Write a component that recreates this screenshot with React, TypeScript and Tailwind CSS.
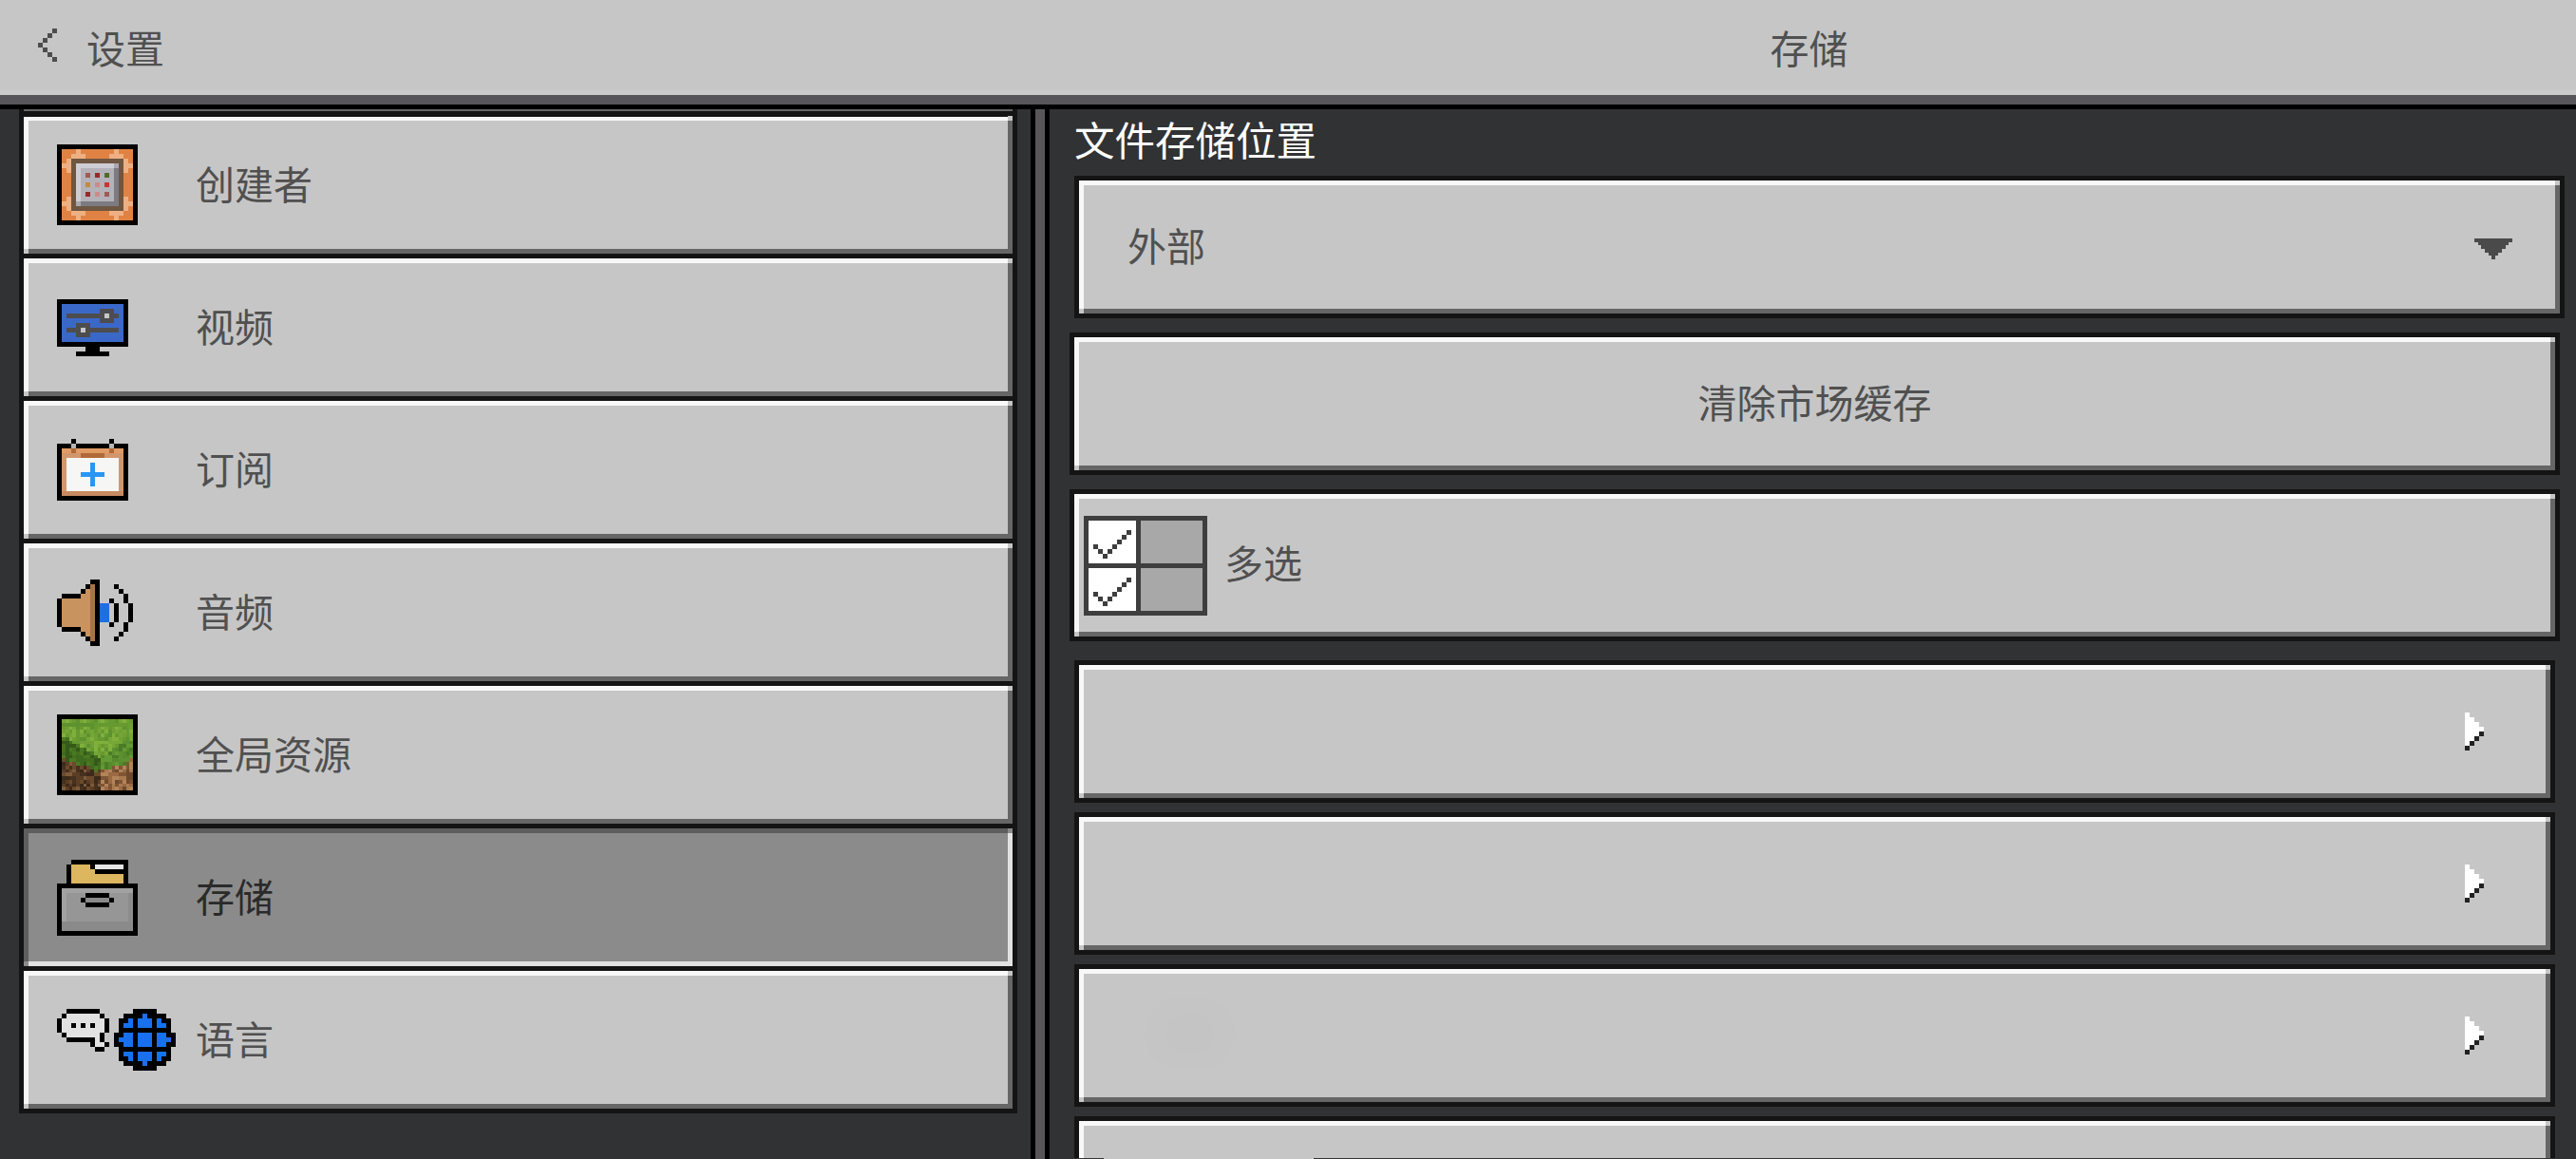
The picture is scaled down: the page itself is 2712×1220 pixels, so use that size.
import React from 'react';

type Rect = [number, number, number, number, string];

// Pixel art helper, one unit is one 5px block of the picture
const Px: React.FC<{ w: number; h: number; rects: Rect[]; className?: string }> = ({ w, h, rects, className }) => (
  <svg width={w * 5} height={h * 5} viewBox={`0 0 ${w} ${h}`} shapeRendering="crispEdges" className={`block shrink-0 ${className ?? ''}`}>
    {rects.map(([x, y, rw, rh, fill], i) => (
      <rect key={i} x={x} y={y} width={rw} height={rh} fill={fill} />
    ))}
  </svg>
);

const K = '#000000';

const creatorRects: Rect[] = [
  [0, 0, 17, 17, K],
  [1, 1, 15, 15, '#e08243'],
  // corner ornaments
  ...[
    [4, 1, 1, 1], [3, 2, 3, 1], [2, 3, 2, 1], [1, 4, 2, 1], [2, 5, 1, 1],
    [12, 1, 1, 1], [11, 2, 3, 1], [13, 3, 2, 1], [14, 4, 2, 1], [14, 5, 1, 1],
    [4, 15, 1, 1], [3, 14, 3, 1], [2, 13, 2, 1], [1, 12, 2, 1], [2, 11, 1, 1],
    [12, 15, 1, 1], [11, 14, 3, 1], [13, 13, 2, 1], [14, 12, 2, 1], [14, 11, 1, 1],
  ].map(([x, y, w, h]) => [x, y, w, h, '#eeb083'] as Rect),
  [3, 3, 11, 11, '#6f5640'],
  [4, 4, 9, 9, '#cfcdd4'],
  [12, 4, 1, 9, '#7c7b82'],
  [4, 12, 9, 1, '#7c7b82'],
  [4, 12, 1, 1, '#a9a8ae'],
  [12, 4, 1, 1, '#a9a8ae'],
  [5, 5, 7, 7, '#b4b2b8'],
  [6, 6, 1, 1, '#a25a58'],
  [8, 6, 1, 1, '#962a2a'],
  [10, 6, 1, 1, '#4f6b28'],
  [6, 8, 1, 1, '#c68a3c'],
  [8, 8, 1, 1, '#cc8a88'],
  [10, 8, 1, 1, '#cc3333'],
  [6, 10, 1, 1, '#962a2a'],
  [8, 10, 1, 1, '#cc8a88'],
  [10, 10, 1, 1, '#a25a58'],
];

const videoRects: Rect[] = [
  [0, 0, 15, 10, K],
  [1, 1, 13, 8, '#3a68c8'],
  [2, 3, 11, 1, '#4d4d4f'],
  [9, 2, 3, 3, '#4d4d4f'],
  [10, 3, 1, 1, '#c6c6c6'],
  [2, 6, 11, 1, '#4d4d4f'],
  [4, 5, 3, 3, '#4d4d4f'],
  [5, 6, 1, 1, '#c6c6c6'],
  [6, 10, 3, 1, K],
  [4, 11, 7, 1, K],
];

const calendarRects: Rect[] = [
  [3, 0, 1, 1, K],
  [11, 0, 1, 1, K],
  [0, 1, 15, 12, K],
  [1, 2, 13, 10, '#d2966c'],
  [1, 2, 13, 1, '#e09a63'],
  [3, 1, 1, 1, '#b5b5b5'],
  [11, 1, 1, 1, '#b5b5b5'],
  [3, 2, 1, 1, '#b06a38'],
  [11, 2, 1, 1, '#b06a38'],
  [5, 3, 5, 1, '#b06a38'],
  [2, 4, 11, 7, '#f6f6f4'],
  [1, 11, 13, 1, '#c88a60'],
  [5, 7, 5, 1, '#2a96f4'],
  [7, 5, 1, 5, '#2a96f4'],
];

const audioRects: Rect[] = [
  [0, 4, 1, 6, K],
  [1, 3, 4, 1, K],
  [1, 10, 4, 1, K],
  [1, 4, 4, 6, '#c8935f'],
  [5, 2, 1, 10, '#c8935f'],
  [5, 2, 1, 1, K],
  [5, 11, 1, 1, K],
  [6, 1, 1, 12, '#c8935f'],
  [6, 1, 1, 1, K],
  [6, 12, 1, 1, K],
  [7, 0, 2, 14, K],
  [7, 1, 1, 12, '#a87444'],
  [9, 5, 2, 4, '#1f6fe0'],
  [11, 4, 1, 1, K],
  [12, 5, 1, 4, K],
  [11, 9, 1, 1, K],
  [12, 1, 1, 1, K],
  [13, 2, 1, 1, K],
  [14, 3, 1, 2, K],
  [15, 5, 1, 4, K],
  [14, 9, 1, 2, K],
  [13, 11, 1, 1, K],
  [12, 12, 1, 1, K],
];

// Dirt block: little tiles picked by a fixed pattern so it looks like the texture
const grassRects: Rect[] = (() => {
  const rects: Rect[] = [[0, 0, 17, 17, K]];
  const top = ['#75a636', '#669a30', '#80b03c', '#5e9230', '#70a035'];
  const leftGreen = ['#3f6b1e', '#4a7a22', '#35591a', '#43701f'];
  const rightGreen = ['#578a2d', '#649a33', '#4a7c27', '#5c9030'];
  const leftDirt = ['#5a3d24', '#6b4a2c', '#46301e', '#7d5a3a', '#3d2a1a'];
  const rightDirt = ['#9a6a42', '#a87a50', '#7f5535', '#b3835a', '#6d4a2e'];
  const size = 0.75;
  for (let j = 0; j < 20; j++) {
    for (let i = 0; i < 20; i++) {
      const x = 1 + i * size;
      const y = 1 + j * size;
      const isLeft = x < 8.7;
      const edge = isLeft ? 4.3 + ((x - 1) * 4.4) / 7.7 : 8.7 - ((x - 8.7) * 4.2) / 7.3;
      const d = y - edge;
      const hash = (i * 7 + j * 13 + i * j * 3) % 97;
      const depth = 2.6 + (Math.abs(x - 8.7) / 7.7) * 1.8 + (hash % 3) * 0.3;
      let set: string[];
      if (d < 0) set = top;
      else if (d < depth) set = isLeft ? leftGreen : rightGreen;
      else set = isLeft ? leftDirt : rightDirt;
      rects.push([x, y, size, size, set[hash % set.length]]);
    }
  }
  return rects;
})();

const storageRects: Rect[] = [
  [3, 0, 12, 1, K],
  [2, 1, 13, 4, K],
  [3, 1, 4, 1, '#dcb75f'],
  [8, 1, 6, 1, '#e6e6e6'],
  [3, 2, 5, 1, '#dcb75f'],
  [3, 3, 11, 2, '#dcb75f'],
  [0, 5, 17, 11, K],
  [1, 6, 15, 9, '#a2a2a2'],
  [2, 7, 13, 6, '#969696'],
  [1, 13, 15, 2, '#8a8a8a'],
  [15, 7, 1, 6, '#8c8c8c'],
  [6, 7, 5, 3, K],
  [5, 8, 7, 1, K],
  [6, 8, 5, 1, '#8a8a8a'],
];

const languageRects: Rect[] = [
  // bubble
  [2, 0, 7, 1, K],
  [1, 1, 9, 1, K],
  [0, 2, 11, 3, K],
  [1, 5, 9, 1, K],
  [2, 6, 8, 1, K],
  [7, 7, 4, 1, K],
  [8, 8, 2, 1, K],
  [2, 1, 7, 1, '#e2e2e2'],
  [1, 2, 9, 3, '#e2e2e2'],
  [2, 5, 7, 1, '#e2e2e2'],
  [8, 6, 1, 1, '#e2e2e2'],
  [8, 7, 2, 1, '#e2e2e2'],
  [3, 3, 1, 1, K],
  [5, 3, 1, 1, K],
  [7, 3, 1, 1, K],
  // globe
  [16, 0, 5, 1, K],
  [14, 1, 9, 1, K],
  [13, 2, 11, 3, K],
  [12, 5, 13, 3, K],
  [13, 8, 11, 3, K],
  [14, 11, 9, 1, K],
  [16, 12, 5, 1, K],
  ...[
    [18, 1, 1, 1], [15, 2, 1, 1], [17, 2, 3, 1], [21, 2, 1, 1], [14, 3, 2, 1], [17, 3, 3, 1], [21, 3, 2, 1],
    [14, 5, 2, 1], [17, 5, 3, 1], [21, 5, 2, 1], [13, 6, 3, 1], [17, 6, 3, 1], [21, 6, 3, 1], [14, 7, 2, 1], [17, 7, 3, 1], [21, 7, 2, 1],
    [14, 9, 2, 1], [17, 9, 3, 1], [21, 9, 2, 1], [15, 10, 1, 1], [17, 10, 3, 1], [21, 10, 1, 1], [18, 11, 1, 1],
  ].map(([x, y, w, h]) => [x, y, w, h, '#1870f0'] as Rect),
];

const check = (oy: number): Rect[] =>
  [[2, 6], [3, 7], [4, 8], [5, 7], [6, 6], [7, 5], [8, 4], [9, 3]].map(([x, y]) => [x, y + oy, 1, 1, '#3e3e3e'] as Rect);

const multiRects: Rect[] = [
  [0, 0, 26, 21, '#3e3e3e'],
  [1, 1, 10, 9, '#ffffff'],
  [12, 1, 13, 9, '#a8a8a8'],
  [1, 11, 10, 9, '#ffffff'],
  [12, 11, 13, 9, '#a8a8a8'],
  ...check(0),
  ...check(10),
];

const chevronRects: Rect[] = [
  [0, 0, 1, 7, '#ffffff'],
  [0, 7, 1, 1, '#222222'],
  [1, 1, 1, 5, '#ffffff'],
  [1, 6, 1, 1, '#222222'],
  [2, 2, 1, 3, '#ffffff'],
  [2, 5, 1, 1, '#222222'],
  [3, 3, 1, 1, '#ffffff'],
  [3, 4, 1, 1, '#222222'],
];

const backRects: Rect[] = [
  [3, 0, 1, 1, '#4d4d4d'],
  [2, 1, 1, 1, '#4d4d4d'],
  [1, 2, 1, 1, '#4d4d4d'],
  [0, 3, 1, 1, '#4d4d4d'],
  [1, 4, 1, 1, '#4d4d4d'],
  [2, 5, 1, 1, '#4d4d4d'],
  [3, 6, 1, 1, '#4d4d4d'],
];

// Raised tile with the 5px bevel and its two little corner squares
const Bevel: React.FC<{ pressed?: boolean; thinTop?: boolean; className?: string; children?: React.ReactNode }> = ({
  pressed,
  thinTop,
  className,
  children,
}) => (
  <div
    className={`relative flex items-center border-x-[5px] border-b-[5px] ${thinTop ? 'border-t-[4px]' : 'border-t-[5px]'} ${
      pressed
        ? 'border-t-[#5e5e5e] border-l-[#5e5e5e] border-r-[#e2e2e2] border-b-[#e2e2e2] bg-[#8b8b8b]'
        : 'border-t-[#f8f8f8] border-l-[#f8f8f8] border-r-[#666666] border-b-[#666666] bg-[#c6c6c6]'
    } ${className ?? ''}`}
  >
    <span className={`absolute -top-[5px] -right-[5px] h-[5px] w-[5px] ${pressed ? 'bg-[#8b8b8b]' : 'bg-[#c6c6c6]'}`} />
    <span className={`absolute -bottom-[5px] -left-[5px] h-[5px] w-[5px] ${pressed ? 'bg-[#8b8b8b]' : 'bg-[#c6c6c6]'}`} />
    {children}
  </div>
);

interface NavItem {
  label: string;
  icon: React.ReactNode;
  selected?: boolean;
}

const navItems: NavItem[] = [
  { label: '创建者', icon: <Px w={17} h={17} rects={creatorRects} /> },
  { label: '视频', icon: <Px w={15} h={12} rects={videoRects} /> },
  { label: '订阅', icon: <Px w={15} h={13} rects={calendarRects} /> },
  { label: '音频', icon: <Px w={16} h={14} rects={audioRects} /> },
  { label: '全局资源', icon: <Px w={17} h={17} rects={grassRects} /> },
  { label: '存储', icon: <Px w={17} h={16} rects={storageRects} />, selected: true },
  { label: '语言', icon: <Px w={25} h={13} rects={languageRects} /> },
];

const App: React.FC = () => {
  return (
    <div className="flex h-[1220px] w-[2712px] flex-col overflow-hidden bg-[#313233] font-['Noto_Sans_CJK_SC','Noto_Sans',sans-serif] text-[41px] leading-none text-[#505050]">
      {/* Header */}
      <div className="flex h-[95px] shrink-0 items-center bg-[#c6c6c6]">
        <div className="flex w-[1105px] shrink-0 items-center pl-[40px]">
          <Px w={4} h={7} rects={backRects} />
          <span className="ml-[31px] pt-[3px]">设置</span>
        </div>
        <div className="flex-1 pr-[8px] pt-[3px] text-center">存储</div>
      </div>
      <div className="h-[5px] shrink-0 bg-[#cbcbcb]" />
      <div className="h-[10px] shrink-0 bg-[#58565a]" />
      <div className="h-[5px] shrink-0 bg-black" />

      <div className="flex min-h-0 flex-1">
        {/* Left list */}
        <div className="w-[1085px] shrink-0 pl-[20px] pr-[14px]">
          <div className="border-x-[5px] border-b-[5px] border-x-[#141414] border-b-[#141414]">
            <div className="h-[2px] bg-[#666666]" />
            <div className="h-[6px] bg-[#141414]" />
            {navItems.map((item, i) => (
              <div key={item.label} className={i < navItems.length - 1 ? 'border-b-[5px] border-b-[#141414]' : ''}>
                <Bevel pressed={item.selected} thinTop={i === 0} className={`pl-[30px] ${i === 0 ? 'h-[144px]' : 'h-[145px]'}`}>
                  <div className="w-[146px] shrink-0">{item.icon}</div>
                  <span className={`pb-[4px] ${item.selected ? 'text-[#2a2a2a]' : ''}`}>{item.label}</span>
                </Bevel>
              </div>
            ))}
          </div>
        </div>

        {/* Divider */}
        <div className="w-[20px] shrink-0 border-x-[5px] border-x-black bg-[#58565a]" />

        {/* Right panel */}
        <div className="relative min-w-0 flex-1 overflow-hidden">
          <div className="flex h-[70px] items-center pb-[8px] pl-[26px] text-[42.5px] text-white">文件存储位置</div>

          <div className="ml-[26px] mr-[12px] border-[5px] border-[#141414]">
            <Bevel className="h-[140px] justify-between pl-[46px] pr-[45px]">
              <span className="pb-[6px]">外部</span>
              <svg width="40" height="22" viewBox="0 0 11 6" shapeRendering="crispEdges" className="mt-[4px] block shrink-0" fill="#4a4a4a">
                <rect x="0" y="0" width="11" height="1" />
                <rect x="1" y="1" width="9" height="1" />
                <rect x="2" y="2" width="7" height="1" />
                <rect x="3" y="3" width="5" height="1" />
                <rect x="4" y="4" width="3" height="1" />
                <rect x="5" y="5" width="1" height="1" />
              </svg>
            </Bevel>
          </div>

          <div className="ml-[21px] mr-[17px] mt-[15px] border-[5px] border-[#141414]">
            <Bevel className="h-[140px] justify-center">
              <span className="pb-[6px]">清除市场缓存</span>
            </Bevel>
          </div>

          <div className="ml-[21px] mr-[17px] mt-[15px] border-[5px] border-[#141414]">
            <Bevel className="h-[150px] gap-[18px] pl-[5px]">
              <Px w={26} h={21} rects={multiRects} />
              <span className="pb-[7px]">多选</span>
            </Bevel>
          </div>

          <div className="ml-[26px] mr-[22px] mt-[20px] flex flex-col gap-[10px]">
            {[0, 1, 2, 3].map(n => (
              <div key={n} className="shrink-0 border-[5px] border-[#141414]">
                <Bevel className="h-[140px] justify-end pr-[65px]">
                  {n === 2 && (
                    <div className="absolute left-[64px] top-[25px] flex h-[75px] w-[95px] items-center justify-center rounded-full bg-[#c5c5c5]">
                      <div className="h-[42px] w-[50px] rounded-full bg-[#c4c4c4]" />
                    </div>
                  )}
                  {n < 3 && <Px w={4} h={8} rects={chevronRects} />}
                </Bevel>
              </div>
            ))}
          </div>

          {/* Bits of the element scrolled in at the very bottom edge */}
          <div className="absolute bottom-0 left-[26px] h-px w-[31px] bg-[#333333]" />
          <div className="absolute bottom-0 left-[278px] right-[22px] h-px bg-[#333333]" />
        </div>
      </div>
    </div>
  );
};

export default App;
